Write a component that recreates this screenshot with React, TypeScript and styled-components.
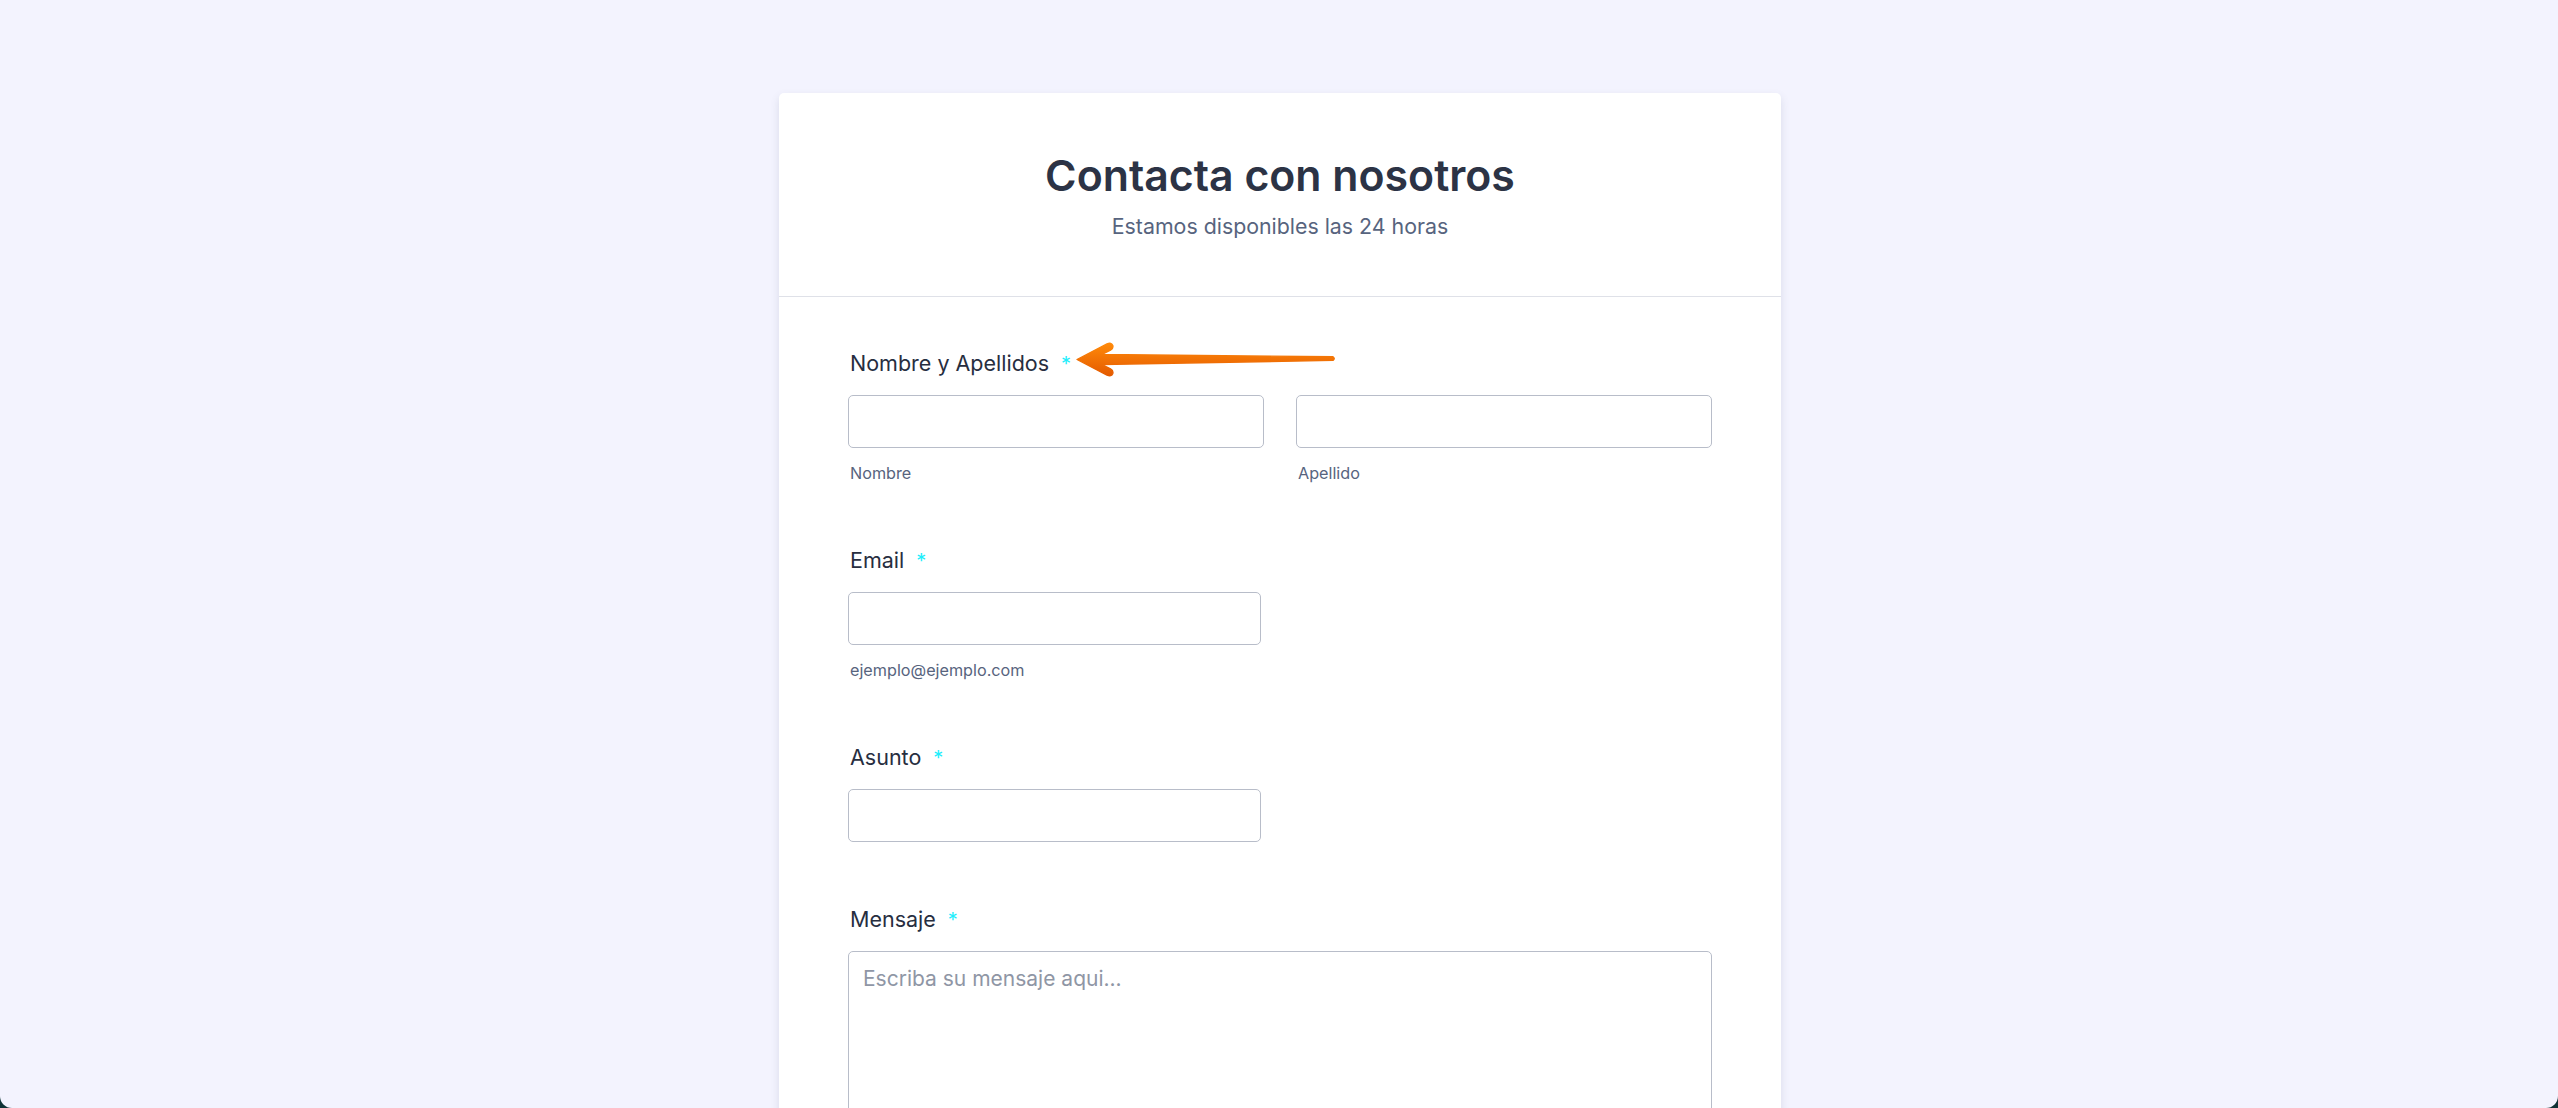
import styled, { createGlobalStyle } from "styled-components"

const GlobalStyle = createGlobalStyle`
  html, body {
    margin: 0;
    padding: 0;
    background: #0f3236;
  }
  * {
    box-sizing: border-box;
  }
`

const Screen = styled.div`
  height: 1108px;
  overflow: hidden;
  background: #f3f3fe;
  border-radius: 0 0 12px 12px;
  padding-top: 93px;
  font-family: Inter, "Noto Sans", sans-serif;
`

const Card = styled.div`
  width: 1002px;
  margin: 0 auto;
  position: relative;
  left: 1px;
  background: #fff;
  border-radius: 5px;
  box-shadow: 0 4px 8px rgba(87, 100, 126, 0.16);
`

const Header = styled.div`
  display: flex;
  flex-direction: column;
  align-items: center;
  padding: 57px 69px 56px;
  border-bottom: 1px solid #dfe1e8;
`

const Title = styled.h1`
  margin: 0;
  font-size: 42.8px;
  line-height: 52px;
  font-weight: 600;
  color: #2c3345;
`

const Subtitle = styled.p`
  margin: 10px 0 0;
  font-size: 21.33px;
  line-height: 28px;
  color: #57647e;
`

const Body = styled.div`
  display: flex;
  flex-direction: column;
  gap: 63px;
  padding: 52px 69px 60px;
`

const Field = styled.div`
  display: flex;
  flex-direction: column;
`

const Label = styled.div`
  position: relative;
  display: flex;
  align-items: baseline;
  padding-left: 2px;
  font-size: 21.5px;
  line-height: 28px;
  font-weight: 400;
  color: #272e3f;
  margin-bottom: 18px;
`

const Required = styled.span`
  margin-left: 12px;
  font-size: 20px;
  line-height: 20px;
  color: #1eeefc;
`

const Row = styled.div`
  display: flex;
  gap: 32px;
`

const Column = styled.div<{ $width?: number }>`
  display: flex;
  flex-direction: column;
  width: ${(p) => (p.$width ? `${p.$width}px` : "100%")};
`

const TextInput = styled.input`
  width: 100%;
  height: 53px;
  padding: 0 14px;
  border: 1px solid #b8bdc9;
  border-radius: 5px;
  background: #fff;
  font-family: inherit;
  font-size: 21.33px;
  color: #2c3345;
  outline: none;
`

const SubLabel = styled.span`
  margin-top: 15px;
  padding-left: 2px;
  font-size: 16.2px;
  line-height: 20px;
  color: #57647e;
`

const MessageBox = styled.textarea`
  width: 100%;
  height: 220px;
  padding: 11px 14px;
  border: 1px solid #b8bdc9;
  border-radius: 5px;
  font-family: inherit;
  font-size: 21px;
  line-height: 32px;
  color: #2c3345;
  resize: none;
  outline: none;

  &::placeholder {
    color: #8f96a5;
  }
`

const Pointer = styled.svg`
  position: absolute;
  left: 224px;
  top: -10px;
  width: 264px;
  height: 41px;
`

const ArrowMark = () => (
  <Pointer viewBox="0 0 264 41">
    <defs>
      <linearGradient id="arrowFill" x1="0" y1="0" x2="0" y2="1">
        <stop offset="0" stopColor="#ff8a0a" />
        <stop offset="1" stopColor="#e45a00" />
      </linearGradient>
    </defs>
    <path
      d="M5 20.5 L35 4.8 Q39.5 3 40.8 6.5 Q41.5 9.5 38.5 11.2 L29.5 15.5 L261 17.8 Q263.5 19.6 261 21.4 L29.5 25.5 L38.5 29.8 Q41.5 31.5 40.8 34.5 Q39.5 38 35 36.2 Z"
      fill="url(#arrowFill)"
      stroke="url(#arrowFill)"
      strokeWidth="1.4"
      strokeLinejoin="round"
    />
  </Pointer>
)

const App = () => {
  return (
    <>
      <GlobalStyle />
      <Screen>
        <Card>
          <Header>
            <Title>Contacta con nosotros</Title>
            <Subtitle>Estamos disponibles las 24 horas</Subtitle>
          </Header>
          <Body>
            <Field>
              <Label>
                Nombre y Apellidos<Required>*</Required>
                <ArrowMark />
              </Label>
              <Row>
                <Column>
                  <TextInput />
                  <SubLabel>Nombre</SubLabel>
                </Column>
                <Column>
                  <TextInput />
                  <SubLabel>Apellido</SubLabel>
                </Column>
              </Row>
            </Field>
            <Field>
              <Label>
                Email<Required>*</Required>
              </Label>
              <Column $width={413}>
                <TextInput type="email" />
                <SubLabel>ejemplo@ejemplo.com</SubLabel>
              </Column>
            </Field>
            <Field>
              <Label>
                Asunto<Required>*</Required>
              </Label>
              <Column $width={413}>
                <TextInput />
              </Column>
            </Field>
            <Field>
              <Label>
                Mensaje<Required>*</Required>
              </Label>
              <MessageBox placeholder="Escriba su mensaje aqui..." />
            </Field>
          </Body>
        </Card>
      </Screen>
    </>
  )
}

export default App
